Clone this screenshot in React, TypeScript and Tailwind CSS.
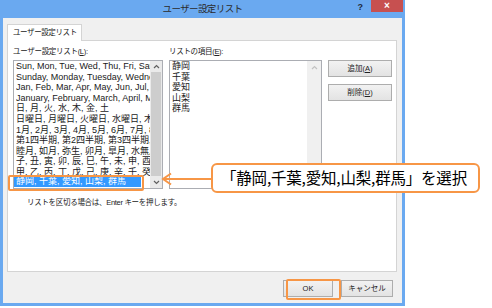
const listRows = [
  'Sun, Mon, Tue, Wed, Thu, Fri, Sat',
  'Sunday, Monday, Tuesday, Wednesday, Thursday, Friday, Saturday',
  'Jan, Feb, Mar, Apr, May, Jun, Jul, Aug, Sep, Oct, Nov, Dec',
  'January, February, March, April, May, June, July, August, September, October, November, December',
  '日, 月, 火, 水, 木, 金, 土',
  '日曜日, 月曜日, 火曜日, 水曜日, 木曜日, 金曜日, 土曜日',
  '1月, 2月, 3月, 4月, 5月, 6月, 7月, 8月, 9月, 10月, 11月, 12月',
  '第1四半期, 第2四半期, 第3四半期, 第4四半期',
  '睦月, 如月, 弥生, 卯月, 皐月, 水無月, 文月, 葉月, 長月, 神無月, 霜月, 師走',
  '子, 丑, 寅, 卯, 辰, 巳, 午, 未, 申, 酉, 戌, 亥',
];

const items = ['静岡', '千葉', '愛知', '山梨', '群馬'];

function DlgButton({ label, keyChar, className = '' }: { label: string; keyChar?: string; className?: string }) {
  return (
    <div
      className={`flex items-center justify-center h-[17px] border border-[#adadad] bg-gradient-to-b from-[#f2f2f2] to-[#e3e3e3] text-[7.5px] text-[#222] ${className}`}
    >
      {label}
      {keyChar && (
        <>
          (<span className="underline">{keyChar}</span>)
        </>
      )}
    </div>
  );
}

export default function App() {
  return (
    <div className="relative w-[492px] h-[308px] bg-white font-['Liberation_Sans','Noto_Sans_CJK_JP',sans-serif] overflow-hidden">
      {/* Window */}
      <div className="w-[405px] h-[306px] bg-[#6aa9f0] flex flex-col px-[3px] pb-[3px]">
        {/* Title bar */}
        <div className="h-[18px] grid grid-cols-[1fr_auto_1fr] items-start">
          <div />
          <div className="pt-[2px] text-[9.5px] tracking-[-0.6px] text-[#2b2b2b]">ユーザー設定リスト</div>
          <div className="flex justify-end items-start -mr-[1px]">
            <span className="text-[9px] font-bold text-[#1e2a3a] mr-[8px] mt-[1px]">?</span>
            <div className="w-[32px] h-[12px] bg-[#c75050] flex items-center justify-center text-white text-[10px] font-bold leading-none">
              ×
            </div>
          </div>
        </div>

        {/* Body */}
        <div className="flex-1 bg-[#f0f0f0] flex flex-col pt-[6px] pl-[4px] pr-[5px]">
          {/* Tab header */}
          <div className="flex">
            <div className="w-[75px] h-[17px] bg-white border border-b-0 border-[#d4d4d4] flex items-center pl-[5px] text-[7.5px] tracking-[-0.4px] text-[#222] -mb-px relative">
              ユーザー設定リスト
            </div>
          </div>

          {/* Tab panel */}
          <div className="h-[232px] bg-white border border-[#d4d4d4] pl-[5px] pt-[6px] flex flex-col">
            <div className="flex">
              {/* Left column */}
              <div className="w-[150px] flex flex-col">
                <div className="h-[13px] text-[7.5px] tracking-[-0.3px] text-[#222] leading-[10px]">
                  ユーザー設定リスト(<span className="underline">L</span>):
                </div>
                <div className="h-[129px] border border-[#abadb3] flex overflow-hidden">
                  <div className="flex-1 flex flex-col overflow-hidden text-[9px] text-[#1a1a1a] pl-[2px]">
                    {listRows.map((r) => (
                      <div key={r} className="h-[10.6px] leading-[10.6px] whitespace-nowrap overflow-hidden shrink-0">
                        {r}
                      </div>
                    ))}
                    <div className="h-[9px] leading-[10.6px] whitespace-nowrap overflow-hidden shrink-0">
                      甲, 乙, 丙, 丁, 戊, 己, 庚, 辛, 壬, 癸
                    </div>
                    <div className="-ml-[2px] w-[127px] h-[11px] leading-[11px] bg-[#3399ff] text-white whitespace-nowrap overflow-hidden pl-[2px] shrink-0">
                      静岡, 千葉, 愛知, 山梨, 群馬
                    </div>
                  </div>
                  {/* Scrollbar */}
                  <div className="w-[12px] bg-[#eaeaea] flex flex-col">
                    <div className="h-[11px] flex items-center justify-center">
                      <svg width="7" height="5" viewBox="0 0 7 5">
                        <path d="M1 4 L3.5 1.5 L6 4" stroke="#606060" strokeWidth="1.2" fill="none" />
                      </svg>
                    </div>
                    <div className="flex-1 mx-[1px] bg-[#cdcdcd]" />
                    <div className="h-[12px] flex items-center justify-center">
                      <svg width="7" height="5" viewBox="0 0 7 5">
                        <path d="M1 1 L3.5 3.5 L6 1" stroke="#606060" strokeWidth="1.2" fill="none" />
                      </svg>
                    </div>
                  </div>
                </div>
              </div>

              {/* Right column */}
              <div className="w-[153px] ml-[6px] flex flex-col">
                <div className="h-[13px] text-[7.5px] tracking-[-0.3px] text-[#222] leading-[10px]">
                  リストの項目(<span className="underline">E</span>):
                </div>
                <div className="h-[129px] border border-[#abadb3] flex">
                  <div className="flex-1 pl-[2px] text-[9px] text-[#1a1a1a]">
                    {items.map((it) => (
                      <div key={it} className="h-[10.6px] leading-[10.6px] overflow-hidden">
                        {it}
                      </div>
                    ))}
                  </div>
                  <div className="w-[14px] bg-[#f0f0f0] flex flex-col items-center pt-[4px]">
                    <svg width="7" height="5" viewBox="0 0 7 5">
                      <path d="M1 4 L3.5 1.5 L6 4" stroke="#c2c2c2" strokeWidth="1.2" fill="none" />
                    </svg>
                  </div>
                </div>
              </div>

              {/* Buttons */}
              <div className="w-[64px] ml-[6px] flex flex-col gap-[7px] pt-[13px]">
                <DlgButton label="追加" keyChar="A" />
                <DlgButton label="削除" keyChar="D" />
              </div>
            </div>

            <div className="pl-[14px] pt-[8px] text-[7.5px] tracking-[-0.3px] text-[#222]">
              リストを区切る場合は、Enter キーを押します。
            </div>
          </div>

          {/* Bottom buttons */}
          <div className="flex-1 flex justify-end items-start pt-[8px] gap-[8px] pr-[4px]">
            <DlgButton label="OK" className="w-[50px]" />
            <DlgButton label="キャンセル" className="w-[52px]" />
          </div>
        </div>
      </div>

      {/* Annotations */}
      <div className="absolute left-[8px] top-[175px] w-[136px] h-[16px] border-2 border-[#f79646] rounded-[2px]" />
      <div className="absolute left-[286px] top-[279px] w-[55px] h-[21px] border-[2.5px] border-[#f79646] rounded-[2px]" />
      <svg className="absolute left-[160px] top-[170px]" width="54" height="18" viewBox="0 0 54 18">
        <path d="M53 9 L3 9" stroke="#f79646" strokeWidth="2" fill="none" />
        <path d="M11 3.5 L3 9 L11 14.5" stroke="#f79646" strokeWidth="2" fill="none" strokeLinejoin="miter" />
      </svg>
      <div className="absolute left-[211px] top-[163px] w-[269px] h-[30px] bg-white border-2 border-[#f79646] rounded-[6px] flex items-center pl-[8px] text-[15.5px] text-black font-['Noto_Sans_CJK_JP',sans-serif] tracking-[-0.2px]">
        「静岡,千葉,愛知,山梨,群馬」を選択
      </div>
    </div>
  );
}
